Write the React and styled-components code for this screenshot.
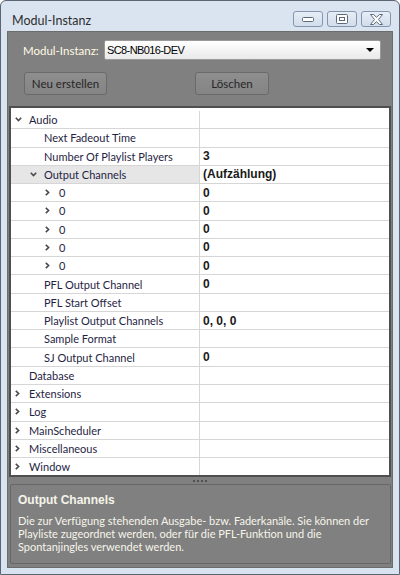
import React from "react";
import styled, {createGlobalStyle} from "styled-components";

const GlobalStyle = createGlobalStyle`
  html, body {
    margin: 0;
    padding: 0;
    background: #ffffff;
  }
  * {
    box-sizing: border-box;
  }
`;

const uiFont = `"Lato", "Noto Sans", sans-serif`;
const boldFont = `"Liberation Sans", Arial, sans-serif`;

const rows = [
    {level: 0, label: "Audio", toggle: "open"},
    {level: 1, label: "Next Fadeout Time"},
    {level: 1, label: "Number Of Playlist Players", value: "3"},
    {level: 1, label: "Output Channels", toggle: "open", value: "(Aufzählung)", selected: true},
    {level: 2, label: "0", toggle: "closed", value: "0"},
    {level: 2, label: "0", toggle: "closed", value: "0"},
    {level: 2, label: "0", toggle: "closed", value: "0"},
    {level: 2, label: "0", toggle: "closed", value: "0"},
    {level: 2, label: "0", toggle: "closed", value: "0"},
    {level: 1, label: "PFL Output Channel", value: "0"},
    {level: 1, label: "PFL Start Offset"},
    {level: 1, label: "Playlist Output Channels", value: "0, 0, 0"},
    {level: 1, label: "Sample Format"},
    {level: 1, label: "SJ Output Channel", value: "0"},
    {level: 0, label: "Database"},
    {level: 0, label: "Extensions", toggle: "closed"},
    {level: 0, label: "Log", toggle: "closed"},
    {level: 0, label: "MainScheduler", toggle: "closed"},
    {level: 0, label: "Miscellaneous", toggle: "closed"},
    {level: 0, label: "Window", toggle: "closed"},
];

function MinimizeIcon() {
    return (
        <svg width="14" height="7" viewBox="0 0 14 7">
            <rect x="1.5" y="1.5" width="11" height="4" rx="1" fill="#fff" stroke="#5d6a7c"/>
        </svg>
    );
}

function MaximizeIcon() {
    return (
        <svg width="12" height="10" viewBox="0 0 12 10">
            <rect x="0.5" y="0.5" width="11" height="9" rx="1" fill="#fff" stroke="#5d6a7c"/>
            <rect x="3.5" y="3.5" width="5" height="3" fill="none" stroke="#5d6a7c"/>
        </svg>
    );
}

function CloseIcon() {
    return (
        <svg width="15" height="11" viewBox="0 0 15 11">
            <polygon
                points="1.5,0.5 4.5,0.5 7.5,3.3 10.5,0.5 13.5,0.5 9.5,5.5 13.5,10.5 10.5,10.5 7.5,7.7 4.5,10.5 1.5,10.5 5.5,5.5"
                fill="#fff"
                stroke="#5d6a7c"
                strokeLinejoin="round"
            />
        </svg>
    );
}

function Chevron({open}) {
    return open ? (
        <svg width="7" height="5" viewBox="0 0 7 5">
            <path d="M0.8 0.8 L3.5 3.6 L6.2 0.8" fill="none" stroke="#4a4a4a" strokeWidth="1.6"/>
        </svg>
    ) : (
        <svg width="5" height="7" viewBox="0 0 5 7">
            <path d="M0.8 0.8 L3.6 3.5 L0.8 6.2" fill="none" stroke="#4a4a4a" strokeWidth="1.6"/>
        </svg>
    );
}

export default function App() {
    return (
        <>
            <GlobalStyle/>
            <WindowFrame>
                <TitleBar>
                    <Title>Modul-Instanz</Title>
                    <Caption>
                        <CaptionButton><MinimizeIcon/></CaptionButton>
                        <CaptionButton><MaximizeIcon/></CaptionButton>
                        <CaptionButton><CloseIcon/></CaptionButton>
                    </Caption>
                </TitleBar>
                <Client>
                    <Header>
                        <InstanceRow>
                            <FieldLabel>Modul-Instanz:</FieldLabel>
                            <Select>
                                <span>SC8-NB016-DEV</span>
                                <DropArrow/>
                            </Select>
                        </InstanceRow>
                        <ButtonRow>
                            <Button $width={83}>Neu erstellen</Button>
                            <Button $width={74}>Löschen</Button>
                        </ButtonRow>
                    </Header>
                    <Grid>
                        {rows.map((row, i) => (
                            <Row key={i}>
                                <NameCell $level={row.level} $selected={row.selected}>
                                    <ToggleSlot>{row.toggle && <Chevron open={row.toggle === "open"}/>}</ToggleSlot>
                                    <span>{row.label}</span>
                                </NameCell>
                                <ValueCell>{row.value}</ValueCell>
                            </Row>
                        ))}
                    </Grid>
                    <Splitter>
                        <i/><i/><i/><i/>
                    </Splitter>
                    <HelpBox>
                        <HelpTitle>Output Channels</HelpTitle>
                        <HelpText>
                            Die zur Verfügung stehenden Ausgabe- bzw. Faderkanäle. Sie können der
                            Playliste zugeordnet werden, oder für die PFL-Funktion und die
                            Spontanjingles verwendet werden.
                        </HelpText>
                    </HelpBox>
                </Client>
            </WindowFrame>
        </>
    );
}

const WindowFrame = styled.div`
  width: 400px;
  height: 575px;
  border: 1px solid #5b6573;
  border-radius: 6px 6px 0 0;
  background: #dae4f1;
  display: flex;
  flex-direction: column;
  font-family: ${uiFont};
`;

const TitleBar = styled.div`
  height: 30px;
  display: flex;
  align-items: flex-start;
  justify-content: space-between;
  padding: 0 8px 0 11px;
`;

const Title = styled.div`
  font-size: 12.5px;
  color: #2e2e2e;
  margin-top: 12px;
`;

const Caption = styled.div`
  display: flex;
  gap: 4px;
  margin-top: 10px;
`;

const CaptionButton = styled.div`
  width: 30px;
  height: 16px;
  border: 1px solid #8595ad;
  border-radius: 3px;
  background: linear-gradient(#e6edf6, #d2ddeb);
  display: flex;
  align-items: center;
  justify-content: center;
`;

const Client = styled.div`
  margin: 0 6px;
  height: 537px;
  border: 1px solid #6c6c6c;
  background: #808080;
  display: flex;
  flex-direction: column;
`;

const Header = styled.div`
  height: 74px;
  padding: 8px 11px 0 15px;
`;

const InstanceRow = styled.div`
  display: flex;
  align-items: center;
  height: 20px;
`;

const FieldLabel = styled.div`
  width: 81px;
  font-size: 11.5px;
  color: #fffbe4;
`;

const Select = styled.div`
  flex: 1;
  height: 20px;
  border: 1px solid #9a9a9a;
  border-radius: 2px;
  background: linear-gradient(#ffffff, #e9e9e9);
  display: flex;
  align-items: center;
  justify-content: space-between;
  padding: 0 6px 0 2px;
  font-family: ${boldFont};
  font-size: 11px;
  letter-spacing: -0.6px;
  color: #000;
`;

const DropArrow = styled.div`
  width: 0;
  height: 0;
  border-left: 4px solid transparent;
  border-right: 4px solid transparent;
  border-top: 4px solid #000;
`;

const ButtonRow = styled.div`
  display: flex;
  gap: 88px;
  margin-top: 12px;
  padding-left: 1px;
`;

const Button = styled.div`
  width: ${p => p.$width}px;
  height: 23px;
  border: 1px solid #6a6a6a;
  border-radius: 3px;
  background: linear-gradient(#8e8e8e, #848484);
  display: flex;
  align-items: center;
  justify-content: center;
  font-size: 11.5px;
  color: #262626;
`;

const Grid = styled.div`
  height: 371px;
  margin: 0 1px 0 1px;
  border: 2px solid #4f4f4f;
  background: #ffffff;
  padding-top: 3px;
  overflow: hidden;
`;

const Row = styled.div`
  display: flex;
  height: 18.27px;
  border-bottom: 1px solid #d6d6d6;
  font-size: 11px;
`;

const NameCell = styled.div`
  width: 188px;
  display: flex;
  align-items: center;
  padding-left: ${p => 3 + p.$level * 15}px;
  background: ${p => (p.$selected ? "#e6e6e6" : "transparent")};
  color: #1f2444;
  white-space: nowrap;
`;

const ToggleSlot = styled.div`
  width: 15px;
  display: flex;
  align-items: center;
  padding-left: 1px;
`;

const ValueCell = styled.div`
  flex: 1;
  border-left: 1px solid #d6d6d6;
  padding-left: 3px;
  display: flex;
  align-items: center;
  font-family: ${boldFont};
  font-weight: bold;
  font-size: 12px;
  color: #1a1a1a;
`;

const Splitter = styled.div`
  height: 7px;
  display: flex;
  justify-content: center;
  align-items: center;
  gap: 2px;

  i {
    width: 2px;
    height: 2px;
    background: #505050;
  }
`;

const HelpBox = styled.div`
  height: 80px;
  margin: 0 1px 0 2px;
  border: 1px solid #676767;
  border-radius: 2px;
  padding: 8px 6px 0 7px;
  color: #f6f5ea;
`;

const HelpTitle = styled.div`
  font-family: ${boldFont};
  font-weight: bold;
  font-size: 12px;
  line-height: 14px;
  margin-bottom: 8px;
`;

const HelpText = styled.div`
  font-size: 11px;
  line-height: 12.8px;
`;
